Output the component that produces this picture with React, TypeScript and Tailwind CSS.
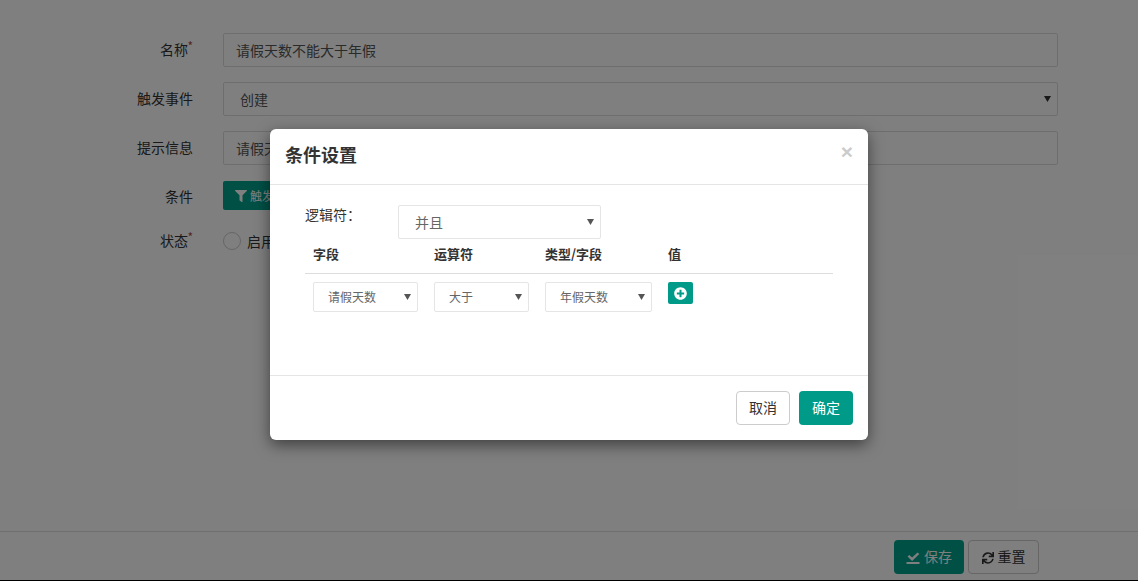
import { FaFilter, FaPlusCircle, FaSync } from 'react-icons/fa';

const font = { fontFamily: '"Noto Sans CJK SC", "Liberation Sans", sans-serif' };

function Caret({ className = '' }: { className?: string }) {
  return (
    <svg width="7" height="7" viewBox="0 0 7 7" className={`mb-[2px] ${className}`}>
      <path d="M0 1h7L3.5 7z" fill="currentColor" />
    </svg>
  );
}

function FormRow({ label, required, labelClass = '', children }: { label: string; required?: boolean; labelClass?: string; children: React.ReactNode }) {
  return (
    <div className="flex items-center gap-[30px]">
      <label className={`relative w-[193px] text-right text-[14px] leading-[20px] text-[#333] ${labelClass}`}>
        <span className={required ? 'mr-[5px]' : ''}>{label}</span>
        {required && <span className="absolute right-0 top-[-3px] text-[12px] text-[#a05050]">*</span>}
      </label>
      <div className="flex-1">{children}</div>
    </div>
  );
}

function SmallSelect({ value, width }: { value: string; width: string }) {
  return (
    <div className={`flex h-[30px] items-center justify-between rounded-[2px] border border-[#e5e5e5] pl-[14px] pr-[6px] text-[12px] text-[#666] ${width}`}>
      <span>{value}</span>
      <Caret className="text-[#555]" />
    </div>
  );
}

export default function App() {
  return (
    <div className="relative flex h-[581px] w-[1138px] flex-col overflow-hidden bg-white" style={font}>
      <div className="flex flex-1 flex-col pr-[80px] pt-[33px]">
        <div className="mb-[15px]">
          <FormRow label="名称" required labelClass="pb-[2px]">
            <div className="flex h-[34px] items-center rounded-[2px] border border-[#ddd] pl-[12px] text-[14px] text-[#555]">请假天数不能大于年假</div>
          </FormRow>
        </div>
        <div className="mb-[15px]">
          <FormRow label="触发事件" labelClass="pb-[2px]">
            <div className="flex h-[34px] items-center justify-between rounded-[2px] border border-[#ddd] pl-[16px] pr-[6px] text-[14px] text-[#555]">
              <span>创建</span>
              <Caret className="text-[#333]" />
            </div>
          </FormRow>
        </div>
        <div className="mb-[16px]">
          <FormRow label="提示信息" labelClass="pb-[3px]">
            <div className="flex h-[34px] items-center rounded-[2px] border border-[#ddd] pl-[12px] text-[14px] text-[#555]">请假天数不能大于年假</div>
          </FormRow>
        </div>
        <div className="mb-[20px]">
          <FormRow label="条件">
            <button className="flex h-[29px] w-[90px] items-center gap-[3px] rounded-[2px] bg-[#00a08c] pl-[12px] text-[12px] text-white">
              <FaFilter className="text-[12px]" />
              触发条件
            </button>
          </FormRow>
        </div>
        <FormRow label="状态" required labelClass="pb-[2px]">
          <div className="flex items-center gap-[6px] text-[14px] text-[#333]">
            <span className="h-[18px] w-[18px] rounded-full border border-[#ccc]" />
            启用
          </div>
        </FormRow>
      </div>

      <div className="flex h-[49px] items-start justify-end gap-[4px] border-t border-[#e0e0e0] pr-[99px] pt-[8px]">
        <button className="flex h-[34px] w-[70px] items-center justify-center gap-[4px] rounded-[4px] bg-[#00a08c] pb-[2px] text-[14px] text-white">
          <svg width="14" height="14" viewBox="0 0 14 14" className="mt-[2px]">
            <path d="M1 6.5l1.8-1.6L5.6 7.6 11 2.4l1.8 1.6-7.2 7zM0 12h13v2H0z" transform="translate(0.5 0)" fill="currentColor" />
          </svg>
          保存
        </button>
        <button className="flex h-[34px] w-[71px] items-center justify-center gap-[4px] rounded-[4px] border border-[#ccc] pb-[2px] text-[14px] text-[#333]">
          <FaSync className="mt-[4px] text-[12px]" />
          重置
        </button>
      </div>
      <div className="h-px bg-black" />

      {/* modal overlay */}
      <div className="absolute inset-0 flex justify-center bg-black/50 pt-[129px]">
        <div className="h-[311px] w-[598px] rounded-[6px] bg-white shadow-[0_5px_15px_rgba(0,0,0,0.5)]">
          <div className="flex h-[56px] items-center justify-between border-b border-[#e5e5e5] pb-[4px] pl-[15px] pr-[15px]">
            <h4 className="text-[18px] font-bold leading-[25px] text-[#333]">条件设置</h4>
            <span className="mb-[6px] text-[21px] font-bold leading-none text-[#ccc]" style={{ fontFamily: '"Liberation Sans", sans-serif' }}>×</span>
          </div>
          <div className="h-[190px] px-[35px] pt-[20px]">
            <div className="flex items-start">
              <span className="mt-[-1px] w-[93px] text-[14px] leading-[20px] text-[#333]">逻辑符：</span>
              <div className="flex h-[34px] w-[203px] items-center justify-between rounded-[2px] border border-[#e5e5e5] pl-[16px] pr-[6px] text-[14px] text-[#666]">
                <span>并且</span>
                <Caret className="text-[#555]" />
              </div>
            </div>
            <div className="mt-[6px] flex h-[29px] items-center border-b border-[#ddd] pb-[10px] pl-[8px] text-[13px] font-bold text-[#333]">
              <span className="w-[121px]">字段</span>
              <span className="w-[111px]">运算符</span>
              <span className="w-[123px]">类型/字段</span>
              <span>值</span>
            </div>
            <div className="flex items-start pl-[8px] pt-[8px]">
              <SmallSelect value="请假天数" width="w-[105px]" />
              <div className="w-[16px]" />
              <SmallSelect value="大于" width="w-[95px]" />
              <div className="w-[16px]" />
              <SmallSelect value="年假天数" width="w-[107px]" />
              <button className="ml-[16px] flex h-[22px] w-[25px] items-center justify-center rounded-[2px] bg-[#009b88] text-white">
                <FaPlusCircle className="text-[13px]" />
              </button>
            </div>
          </div>
          <div className="flex h-[65px] items-start justify-end gap-[9px] border-t border-[#e5e5e5] pr-[15px] pt-[15px]">
            <button className="h-[34px] w-[54px] rounded-[4px] border border-[#ccc] pb-[2px] text-[14px] text-[#333]">取消</button>
            <button className="h-[34px] w-[54px] rounded-[4px] bg-[#009b88] pb-[2px] text-[14px] text-white">确定</button>
          </div>
        </div>
      </div>
    </div>
  );
}
